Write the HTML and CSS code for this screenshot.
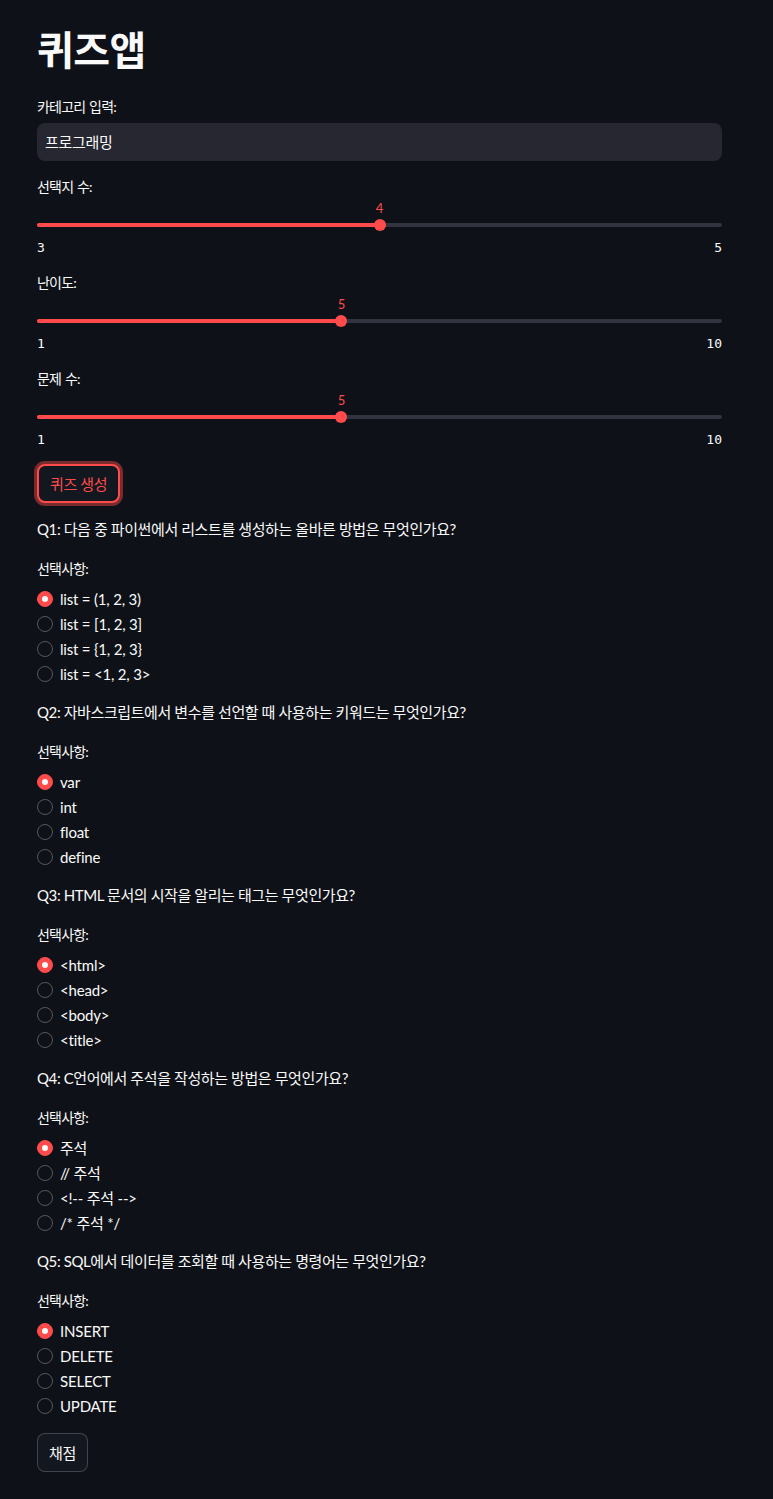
FILE: index.html
```html
<!DOCTYPE html>
<html lang="ko">
<head>
<meta charset="utf-8">
<title>퀴즈앱</title>
<link rel="stylesheet" href="styles.css">
</head>
<body>
<main class="main">
  <h1 class="title">퀴즈앱</h1>

  <div class="field">
    <label class="label">카테고리 입력:</label>
    <div class="text-input">프로그래밍</div>
  </div>

  <div class="slider">
    <div class="label">선택지 수:</div>
    <div class="slider-body">
      <div class="track">
        <div class="fill" style="width:50%"></div>
        <div class="thumb" style="left:50%"><span class="thumb-value">4</span></div>
      </div>
    </div>
    <div class="ticks"><span>3</span><span>5</span></div>
  </div>

  <div class="slider">
    <div class="label">난이도:</div>
    <div class="slider-body">
      <div class="track">
        <div class="fill" style="width:44.444%"></div>
        <div class="thumb" style="left:44.444%"><span class="thumb-value">5</span></div>
      </div>
    </div>
    <div class="ticks"><span>1</span><span>10</span></div>
  </div>

  <div class="slider">
    <div class="label">문제 수:</div>
    <div class="slider-body">
      <div class="track">
        <div class="fill" style="width:44.444%"></div>
        <div class="thumb" style="left:44.444%"><span class="thumb-value">5</span></div>
      </div>
    </div>
    <div class="ticks"><span>1</span><span>10</span></div>
  </div>

  <button class="btn btn-focus">퀴즈 생성</button>

  <section class="question">
    <p class="q-text">Q1: 다음 중 파이썬에서 리스트를 생성하는 올바른 방법은 무엇인가요?</p>
    <div class="label q-label">선택사항:</div>
    <ul class="radios">
      <li class="radio checked"><span class="dot"></span>list = (1, 2, 3)</li>
      <li class="radio"><span class="dot"></span>list = [1, 2, 3]</li>
      <li class="radio"><span class="dot"></span>list = {1, 2, 3}</li>
      <li class="radio"><span class="dot"></span>list = &lt;1, 2, 3&gt;</li>
    </ul>
  </section>

  <section class="question">
    <p class="q-text">Q2: 자바스크립트에서 변수를 선언할 때 사용하는 키워드는 무엇인가요?</p>
    <div class="label q-label">선택사항:</div>
    <ul class="radios">
      <li class="radio checked"><span class="dot"></span>var</li>
      <li class="radio"><span class="dot"></span>int</li>
      <li class="radio"><span class="dot"></span>float</li>
      <li class="radio"><span class="dot"></span>define</li>
    </ul>
  </section>

  <section class="question">
    <p class="q-text">Q3: HTML 문서의 시작을 알리는 태그는 무엇인가요?</p>
    <div class="label q-label">선택사항:</div>
    <ul class="radios">
      <li class="radio checked"><span class="dot"></span>&lt;html&gt;</li>
      <li class="radio"><span class="dot"></span>&lt;head&gt;</li>
      <li class="radio"><span class="dot"></span>&lt;body&gt;</li>
      <li class="radio"><span class="dot"></span>&lt;title&gt;</li>
    </ul>
  </section>

  <section class="question">
    <p class="q-text">Q4: C언어에서 주석을 작성하는 방법은 무엇인가요?</p>
    <div class="label q-label">선택사항:</div>
    <ul class="radios">
      <li class="radio checked"><span class="dot"></span>주석</li>
      <li class="radio"><span class="dot"></span>// 주석</li>
      <li class="radio"><span class="dot"></span>&lt;!-- 주석 --&gt;</li>
      <li class="radio"><span class="dot"></span>/* 주석 */</li>
    </ul>
  </section>

  <section class="question">
    <p class="q-text">Q5: SQL에서 데이터를 조회할 때 사용하는 명령어는 무엇인가요?</p>
    <div class="label q-label">선택사항:</div>
    <ul class="radios">
      <li class="radio checked"><span class="dot"></span>INSERT</li>
      <li class="radio"><span class="dot"></span>DELETE</li>
      <li class="radio"><span class="dot"></span>SELECT</li>
      <li class="radio"><span class="dot"></span>UPDATE</li>
    </ul>
  </section>

  <button class="btn btn-plain">채점</button>
</main>
</body>
</html>
```

FILE: styles.css
```css
* { box-sizing: border-box; }

html, body {
  margin: 0;
  padding: 0;
  background: #0e1117;
  color: #fafafa;
  font-family: "Lato", "Noto Sans CJK KR", sans-serif;
}

.main {
  width: 685px;
  margin-left: 37px;
  padding-top: 22px;
  padding-bottom: 20px;
  display: flex;
  flex-direction: column;
  align-items: flex-start;
}

.title {
  margin: 0;
  font-size: 40px;
  line-height: 56px;
  font-weight: 700;
  letter-spacing: -0.5px;
}

.label {
  display: block;
  font-size: 14px;
  line-height: 20px;
  letter-spacing: -0.8px;
  word-spacing: 1px;
  color: #fafafa;
}

.field {
  width: 100%;
  margin-top: 19px;
  display: flex;
  flex-direction: column;
  gap: 6px;
}

.text-input {
  width: 100%;
  height: 38px;
  background: #262730;
  border-radius: 8px;
  padding: 0 8px;
  font-size: 15px;
  line-height: 38px;
  letter-spacing: -0.3px;
}

.slider {
  width: 100%;
  margin-top: 16px;
  display: flex;
  flex-direction: column;
}
.slider + .slider { margin-top: 17px; }

.slider-body {
  padding-top: 20px;
  height: 36px;
  display: flex;
  align-items: center;
}

.track {
  position: relative;
  width: 100%;
  height: 4px;
  border-radius: 2px;
  background: #31333f;
}

.fill {
  height: 100%;
  border-radius: 2px;
  background: #ff4b4b;
}

.thumb {
  position: absolute;
  top: 50%;
  width: 12px;
  height: 12px;
  margin: -6px 0 0 -6px;
  border-radius: 50%;
  background: #ff4b4b;
}

.thumb-value {
  position: absolute;
  left: 50%;
  bottom: 15px;
  transform: translateX(-50%);
  font-family: "Lato", sans-serif;
  font-size: 13px;
  line-height: 16px;
  color: #ff4b4b;
}

.ticks {
  margin-top: 7px;
  display: flex;
  justify-content: space-between;
  font-family: "DejaVu Sans Mono", monospace;
  font-size: 13px;
  line-height: 16px;
  color: #fafafa;
}

.btn {
  font-family: "Lato", "Noto Sans CJK KR", sans-serif;
  font-size: 15px;
  line-height: 20px;
  border-radius: 8px;
  background: #13171f;
  cursor: pointer;
  letter-spacing: -0.4px;
}

.btn-focus {
  margin-top: 16px;
  height: 39px;
  padding: 0 11px;
  color: #ff4b4b;
  border: 2px solid #ff4b4b;
  box-shadow: 0 0 0 3px rgba(255, 75, 75, 0.45);
}

.btn-plain {
  margin-top: 15px;
  height: 39px;
  padding: 0 11px;
  color: #fafafa;
  border: 1px solid rgba(250, 250, 250, 0.2);
}

.question {
  width: 100%;
  margin-top: 14px;
  display: flex;
  flex-direction: column;
}
.question + .question { margin-top: 14px; }

.q-text {
  margin: 0;
  font-size: 15px;
  line-height: 24px;
  letter-spacing: -0.4px;
}

.q-label { margin-top: 18px; }

.radios {
  list-style: none;
  margin: 7px 0 0;
  padding: 0;
  display: flex;
  flex-direction: column;
}

.radio {
  height: 25px;
  display: flex;
  align-items: center;
  gap: 7px;
  font-size: 15px;
  letter-spacing: -0.2px;
}

.dot {
  width: 16px;
  height: 16px;
  border-radius: 50%;
  border: 1px solid rgba(250, 250, 250, 0.3);
  display: flex;
  align-items: center;
  justify-content: center;
  flex: none;
}

.radio.checked .dot {
  background: #ff4b4b;
  border-color: #ff4b4b;
}
.radio.checked .dot::after {
  content: "";
  width: 6px;
  height: 6px;
  border-radius: 50%;
  background: #fafafa;
}
```
